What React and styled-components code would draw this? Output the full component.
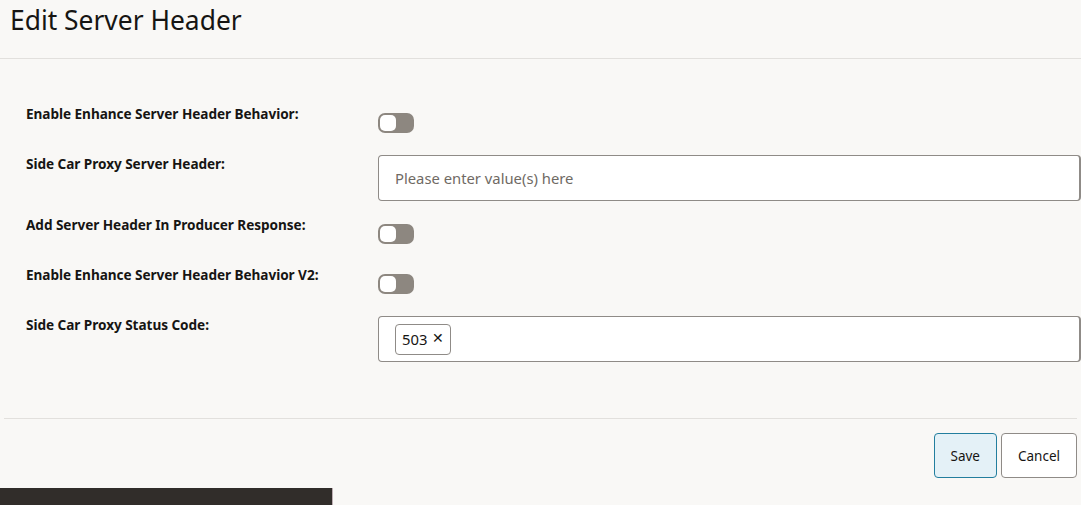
import React from "react";
import styled, { createGlobalStyle } from "styled-components";

const GlobalStyle = createGlobalStyle`
  html, body {
    margin: 0;
    padding: 0;
    background: #f9f8f6;
  }
  body {
    font-family: "Noto Sans", "Open Sans", sans-serif;
    color: #161513;
    overflow: hidden;
  }
`;

const fields = [
  { label: "Enable Enhance Server Header Behavior:", type: "toggle" },
  { label: "Side Car Proxy Server Header:", type: "text", placeholder: "Please enter value(s) here" },
  { label: "Add Server Header In Producer Response:", type: "toggle" },
  { label: "Enable Enhance Server Header Behavior V2:", type: "toggle" },
  { label: "Side Car Proxy Status Code:", type: "chips", chips: ["503"] },
];

const App = () => {
  return (
    <>
      <GlobalStyle />
      <Page>
        <Header>
          <Title>Edit Server Header</Title>
        </Header>
        <Form>
          {fields.map((f) => (
            <Row key={f.label}>
              <Label>{f.label}</Label>
              <Field>
                {f.type === "toggle" && (
                  <ToggleWrap>
                    <Toggle>
                      <Knob />
                    </Toggle>
                  </ToggleWrap>
                )}
                {f.type === "text" && (
                  <InputBox>
                    <Input placeholder={f.placeholder} />
                  </InputBox>
                )}
                {f.type === "chips" && (
                  <InputBox>
                    {f.chips.map((c) => (
                      <Chip key={c}>
                        {c}
                        <ChipClose>✕</ChipClose>
                      </Chip>
                    ))}
                  </InputBox>
                )}
              </Field>
            </Row>
          ))}
        </Form>
        <Footer>
          <Button primary>Save</Button>
          <Button>Cancel</Button>
        </Footer>
        <DarkBar />
      </Page>
    </>
  );
};

const Page = styled.div`
  width: 1081px;
  height: 505px;
  display: flex;
  flex-direction: column;
`;

const Header = styled.div`
  height: 58px;
  flex-shrink: 0;
  padding-left: 10px;
  border-bottom: 1px solid #e2e0dd;
`;

const Title = styled.h1`
  margin: 0;
  padding-top: 3px;
  font-size: 26.4px;
  font-weight: 400;
  line-height: 34px;
`;

const Form = styled.div`
  padding: 45px 0 0 26px;
  height: 360px;
  flex-shrink: 0;
  box-sizing: border-box;
  border-bottom: 1px solid #e2e0dd;
  margin: 0 4px 0 4px;
  padding-left: 22px;
`;

const Row = styled.div`
  display: grid;
  grid-template-columns: 352px 1fr;
  margin-bottom: 14px;
`;

const Label = styled.div`
  font-size: 13.6px;
  font-weight: 700;
  line-height: 20px;
  color: #161513;
  letter-spacing: -0.05px;
`;

const Field = styled.div`
  display: flex;
  flex-direction: column;
`;

const ToggleWrap = styled.div`
  padding: 9px 0 7px;
`;

const Toggle = styled.div`
  width: 36px;
  height: 20px;
  border-radius: 7px;
  background: #8d8780;
  position: relative;
`;

const Knob = styled.span`
  position: absolute;
  left: 2px;
  top: 2px;
  width: 16px;
  height: 16px;
  border-radius: 5px;
  background: #fff;
`;

const InputBox = styled.div`
  margin-top: 1px;
  height: 46px;
  box-sizing: border-box;
  border: 1px solid #8f8b87;
  border-right-width: 2px;
  border-radius: 4px;
  background: #fff;
  margin-right: -4px;
  display: flex;
  align-items: center;
  padding: 0 16px;
`;

const Input = styled.input`
  border: none;
  outline: none;
  background: transparent;
  width: 100%;
  font-family: "Noto Sans", "Open Sans", sans-serif;
  font-size: 14.8px;
  color: #161513;
  padding: 0;
  &::placeholder {
    color: #6f6a64;
  }
`;

const Chip = styled.span`
  display: inline-flex;
  align-items: center;
  gap: 5px;
  height: 31px;
  box-sizing: border-box;
  padding: 0 6px;
  border: 1px solid #8f8b87;
  border-radius: 4px;
  font-size: 14.8px;
`;

const ChipClose = styled.span`
  font-size: 13.5px;
  line-height: 1;
`;

const Footer = styled.div`
  display: flex;
  justify-content: flex-end;
  gap: 4px;
  padding: 14px 4px 0 0;
`;

const Button = styled.button`
  height: 45px;
  box-sizing: border-box;
  padding: 0 16px;
  min-width: 63px;
  border-radius: 4px;
  font-family: "Noto Sans", "Open Sans", sans-serif;
  font-size: 13.5px;
  color: #161513;
  border: 1px solid ${(p) => (p.primary ? "#227e9e" : "#8f8b87")};
  background: ${(p) => (p.primary ? "#e4f1f7" : "#fff")};
`;

const DarkBar = styled.div`
  margin-top: 10px;
  width: 332px;
  height: 20px;
  flex-shrink: 0;
  background: #312d2a;
  border-right: 1px solid #bdaeb3;
`;

export default App;
